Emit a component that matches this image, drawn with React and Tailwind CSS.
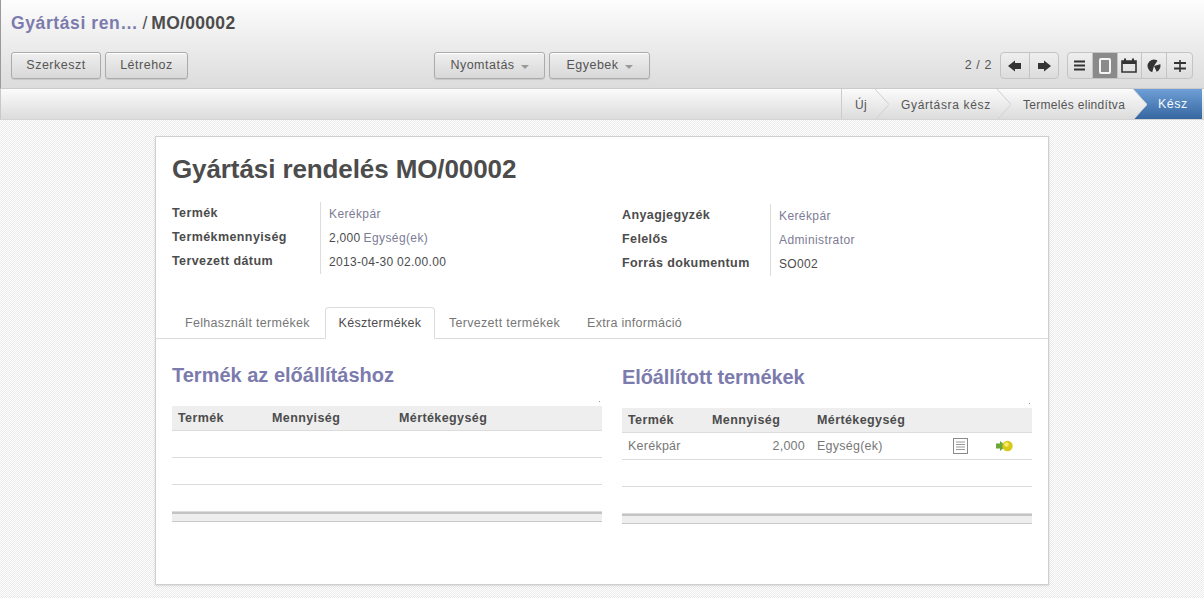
import React from "react";

const Btn = ({ children, className = "" }) => (
  <button className={`h-[27px] rounded-[3px] border border-[#ababab] bg-gradient-to-b from-[#efefef] to-[#d8d8d8] text-[12.5px] tracking-[0.5px] text-[#555555] shadow-[inset_0_1px_0_#fff,0_1px_1px_rgba(0,0,0,0.1)] flex items-center justify-center ${className}`}>
    {children}
  </button>
);

const Caret = () => <span className="ml-[6px] mt-[2px] w-0 h-0 border-x-[4px] border-x-transparent border-t-[4px] border-t-[#999]" />;

const Chevron = () => (
  <svg width="14" height="31" viewBox="0 0 14 31" className="absolute right-[-14px] top-0 z-10">
    <path d="M0 0 L14 15.5 L0 31 Z" fill="url(#st)" />
    <path d="M0 0 L14 15.5 L0 31" fill="none" stroke="#d0d0d0" />
  </svg>
);

const Step = ({ children, className = "" }) => (
  <div className={`relative h-[31px] flex items-center text-[12px] text-[#555555] ${className}`}>
    {children}
    <Chevron />
  </div>
);

const IconCell = ({ children, active, last }) => (
  <div className={`w-[25px] h-full flex items-center justify-center ${last ? "" : "border-r border-[#c4c4c4]"} ${active ? "bg-[#8a8a8a]" : ""}`}>
    {children}
  </div>
);

const Field = ({ label, children }) => (
  <div className="flex h-[24px] items-center">
    <div className="w-[148px] font-bold text-[12.5px] tracking-[0.4px] text-[#4c4c4c] -mt-[2px]">{label}</div>
    <div className="pl-[8px] h-full flex items-center border-l border-[#dcdcdc] text-[12px] tracking-[0.3px] text-[#4c4c4c]">{children}</div>
  </div>
);

const Link = ({ children }) => <span className="text-[#7c7c95] tracking-[0.4px]">{children}</span>;

const Head = ({ cols, items }) => (
  <div className={`grid ${cols} h-[25px] items-center bg-[#eeeeee] border-b border-[#dcdcdc] font-bold text-[12.5px] tracking-[0.4px] text-[#4c4c4c]`}>
    {items.map((t) => (
      <div key={t} className="pl-[6px]">{t}</div>
    ))}
  </div>
);

const Empty = () => <div className="h-[27px] border-b border-[#dcdcdc]" />;
const Foot = () => <div className="h-[10px] border-t-2 border-b border-t-[#c4c4c4] border-b-[#c8c8c8] bg-[#eeeeee]" />;
const Dot = () => (
  <div className="h-[4px] flex justify-end pr-[2px] mb-[2px]">
    <span className="w-[1px] h-[1px] mt-[1px] bg-[#999]" />
  </div>
);

export default function App() {
  return (
    <div className="w-[1204px] h-[598px] overflow-hidden bg-white font-['Liberation_Sans',Arial,sans-serif] flex flex-col">
      <svg width="0" height="0" className="absolute">
        <defs>
          <linearGradient id="st" x1="0" y1="0" x2="0" y2="1">
            <stop offset="0" stopColor="#fbfbfb" />
            <stop offset="1" stopColor="#dcdcdc" />
          </linearGradient>
        </defs>
      </svg>

      <header className="h-[89px] shrink-0 bg-gradient-to-b from-[#fdfdfd] to-[#dcdcdc] border-b border-[#cacaca] border-l border-l-[#9a9a9a] pl-[10px] pr-[11px] pt-[13px]">
        <div className="h-[20px] flex items-center text-[17.5px] font-bold text-[#4c4c4c]">
          <span className="text-[#7c7bad] tracking-[0.6px]">Gyártási ren…</span>
          <span className="font-normal mx-[4px] text-[#4c4c4c]">/</span>
          <span className="tracking-[0.3px]">MO/00002</span>
        </div>
        <div className="mt-[19px] flex items-center">
          <Btn className="w-[90px]">Szerkeszt</Btn>
          <Btn className="w-[83px] ml-[4px]">Létrehoz</Btn>
          <Btn className="w-[111px] ml-[246px]">Nyomtatás<Caret /></Btn>
          <Btn className="w-[101px] ml-[4px]">Egyebek<Caret /></Btn>
          <span className="ml-auto text-[12.5px] tracking-[0.6px] text-[#555555]">2 / 2</span>
          <div className="ml-[8px] h-[27px] w-[59px] flex rounded-[4px] border border-[#c4c4c4] bg-gradient-to-b from-[#efefef] to-[#dcdcdc] overflow-hidden">
            <div className="flex-1 flex items-center justify-center border-r border-[#c4c4c4]">
              <svg width="14" height="12" viewBox="0 0 14 12"><path d="M0 6 L7 0.5 V3 H13 V9 H7 V11.5 Z" fill="#333" /></svg>
            </div>
            <div className="flex-1 flex items-center justify-center">
              <svg width="14" height="12" viewBox="0 0 14 12"><path d="M14 6 L7 0.5 V3 H1 V9 H7 V11.5 Z" fill="#333" /></svg>
            </div>
          </div>
          <div className="ml-[8px] h-[27px] w-[126px] flex rounded-[4px] border border-[#c4c4c4] bg-gradient-to-b from-[#efefef] to-[#dcdcdc] overflow-hidden">
            <IconCell>
              <svg width="13" height="11" viewBox="0 0 13 11"><path d="M1 1.5 H12 M1 5.5 H12 M1 9.5 H12" stroke="#333" strokeWidth="2" /></svg>
            </IconCell>
            <IconCell active>
              <svg width="12" height="16" viewBox="0 0 12 16"><rect x="1" y="1" width="10" height="14" rx="1" fill="none" stroke="#f4f4f4" strokeWidth="2" /></svg>
            </IconCell>
            <IconCell>
              <svg width="16" height="15" viewBox="0 0 16 15"><path d="M1 3 H15 V14 H1 Z" fill="none" stroke="#333" strokeWidth="1.6" /><path d="M1 3 H15 V6 H1 Z" fill="#333" /><path d="M4 0.5 V3 M12 0.5 V3" stroke="#333" strokeWidth="2" /></svg>
            </IconCell>
            <IconCell>
              <svg width="14" height="14" viewBox="0 0 14 14"><circle cx="7" cy="7" r="6.5" fill="#333" /><path d="M7 7 L14 5 L11 1 Z" fill="#e8e8e8" /><path d="M7 7 L5 14 L10 13.5 Z" fill="#e8e8e8" /></svg>
            </IconCell>
            <IconCell last>
              <svg width="14" height="14" viewBox="0 0 14 14"><path d="M1 4 H13 M1 9.5 H13" stroke="#333" strokeWidth="2" /><path d="M7 1 V13" stroke="#333" strokeWidth="1.6" /></svg>
            </IconCell>
          </div>
        </div>
      </header>

      <div className="h-[31px] shrink-0 bg-gradient-to-b from-[#fbfbfb] to-[#dcdcdc] border-b border-[#d4d4d4] border-l border-l-[#c8c8c8] flex justify-end pr-[2px] overflow-hidden">
        <Step className="w-[34px] pl-[13px] border-l border-[#cccccc] tracking-[0.45px]">Új</Step>
        <Step className="w-[122px] pl-[26px] tracking-[0.65px]">Gyártásra kész</Step>
        <Step className="w-[136px] pl-[26px] tracking-[0.3px]">Termelés elindítva</Step>
        <div className="w-[69px] h-[31px] flex items-center pl-[25px] text-[12.5px] tracking-[0.45px] text-[#f4f8fc] bg-gradient-to-b from-[#6f9fd6] to-[#34659f] [clip-path:polygon(0_0,100%_0,100%_100%,0_100%,14px_50%)]">Kész</div>
      </div>

      <main className="flex-1 bg-[repeating-conic-gradient(#ebebeb_0%_25%,#ffffff_0%_50%)] bg-[length:2px_2px] pt-[16px] pl-[155px]">
        <div className="w-[894px] h-[449px] bg-white border border-[#cfcfcf] shadow-[0_1px_2px_rgba(0,0,0,0.12)]">
          <div className="px-[16px] pt-[17px]">
            <h1 className="h-[30px] flex items-center text-[26px] font-bold tracking-[-0.1px] text-[#4c4c4c]">Gyártási rendelés MO/00002</h1>
            <div className="flex mt-[18px]">
              <div className="w-[450px]">
                <Field label="Termék"><Link>Kerékpár</Link></Field>
                <Field label="Termékmennyiség"><span>2,000</span><span className="ml-[3px]"><Link>Egység(ek)</Link></span></Field>
                <Field label="Tervezett dátum"><span>2013-04-30 02.00.00</span></Field>
              </div>
              <div className="w-[410px] mt-[2px]">
                <Field label="Anyagjegyzék"><Link>Kerékpár</Link></Field>
                <Field label="Felelős"><Link>Administrator</Link></Field>
                <Field label="Forrás dokumentum"><span>SO002</span></Field>
              </div>
            </div>
          </div>

          <div className="mt-[31px] h-[32px] border-b border-[#dcdcdc] flex pl-[16px] text-[12.5px] tracking-[0.3px] text-[#777]">
            <div className="w-[153px] h-[32px] flex items-center pl-[13px]">Felhasznált termékek</div>
            <div className="w-[110px] h-[32px] flex items-center justify-center bg-white border border-[#dcdcdc] border-b-white rounded-t-[4px] text-[#4c4c4c]">Késztermékek</div>
            <div className="w-[138px] h-[32px] flex items-center pl-[14px]">Tervezett termékek</div>
            <div className="h-[32px] flex items-center pl-[14px]">Extra információ</div>
          </div>

          <div className="flex pl-[16px] pt-[24px]">
            <section className="w-[430px]">
              <h2 className="h-[24px] flex items-center text-[20px] font-bold tracking-[0px] text-[#7c7bad]">Termék az előállításhoz</h2>
              <div className="mt-[13px]">
                <Dot />
                <Head cols="grid-cols-[94px_127px_1fr]" items={["Termék", "Mennyiség", "Mértékegység"]} />
                <Empty /><Empty /><Empty />
                <Foot />
              </div>
            </section>
            <section className="w-[410px] ml-[20px] mt-[2px]">
              <h2 className="h-[24px] flex items-center text-[20px] font-bold tracking-[-0.1px] text-[#7c7bad]">Előállított termékek</h2>
              <div className="mt-[13px]">
                <Dot />
                <Head cols="grid-cols-[84px_105px_1fr]" items={["Termék", "Mennyiség", "Mértékegység"]} />
                <div className="h-[27px] border-b border-[#dcdcdc] grid grid-cols-[84px_105px_136px_49px_1fr] items-center text-[12.5px] tracking-[0.25px] text-[#777]">
                  <div className="pl-[6px]">Kerékpár</div>
                  <div className="pr-[6px] text-right">2,000</div>
                  <div className="pl-[6px]">Egység(ek)</div>
                  <div className="pl-[6px]">
                    <svg width="15" height="16" viewBox="0 0 15 16" className="block">
                      <rect x="0.5" y="0.5" width="14" height="15" fill="#fff" stroke="#8a8a8a" />
                      <path d="M3 4 H12 M3 6.5 H12 M3 9 H12 M3 11.5 H12" stroke="#9a9a9a" />
                    </svg>
                  </div>
                  <div>
                    <svg width="17" height="12" viewBox="0 0 17 12" className="block">
                      <path d="M0 3.5 H4 V1 L10 6 L4 11 V8.5 H0 Z" fill="#6aa63c" />
                      <circle cx="11.5" cy="6" r="5.2" fill="#d8c81c" />
                      <circle cx="10.5" cy="4.5" r="2.2" fill="#f6ee6a" />
                    </svg>
                  </div>
                </div>
                <Empty /><Empty />
                <Foot />
              </div>
            </section>
          </div>
        </div>
      </main>
    </div>
  );
}
